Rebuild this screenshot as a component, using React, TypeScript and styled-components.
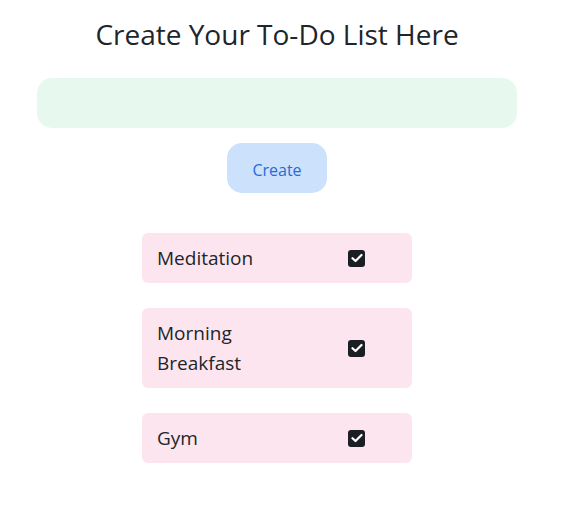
import React from "react";
import styled, { createGlobalStyle } from "styled-components";

const Global = createGlobalStyle`
  html, body { margin: 0; padding: 0; background: #ffffff; }
  body { font-family: "Open Sans", "Noto Sans", sans-serif; color: #212529; }
`;

const Page = styled.div`
  width: 554px;
  display: flex;
  flex-direction: column;
  align-items: center;
  padding-top: 14px;
`;

const Title = styled.h1`
  margin: 0;
  font-size: 28px;
  font-weight: 400;
  line-height: 40px;
  color: #212529;
`;

const Input = styled.input`
  box-sizing: border-box;
  margin-top: 24px;
  width: 480px;
  height: 50px;
  border: none;
  border-radius: 15px;
  background: #e7f8ef;
  outline: none;
  padding: 0 16px;
  font-family: inherit;
  font-size: 16px;
`;

const CreateButton = styled.button`
  margin-top: 15px;
  width: 100px;
  height: 50px;
  padding: 3px 0 0;
  border: none;
  border-radius: 15px;
  background: #cce1fb;
  color: #2a6ad4;
  font-family: inherit;
  font-size: 16px;
  cursor: pointer;
`;

const List = styled.div`
  margin-top: 40px;
  display: flex;
  flex-direction: column;
  gap: 25px;
`;

const Card = styled.div`
  box-sizing: border-box;
  width: 270px;
  padding: 10px 15px;
  border-radius: 6px;
  background: #fde5f0;
  display: flex;
  align-items: center;
`;

const Label = styled.span`
  flex: 0 0 150px;
  font-size: 19px;
  line-height: 30px;
  color: #212529;
`;

const Check = styled.span`
  margin-left: 41px;
  width: 17px;
  height: 17px;
  border-radius: 3px;
  background: #1b1e22;
  display: flex;
  align-items: center;
  justify-content: center;
`;

const items = ["Meditation", "Morning Breakfast", "Gym"];

export default function App() {
  return (
    <>
      <Global />
      <Page>
        <Title>Create Your To-Do List Here</Title>
        <Input type="text" />
        <CreateButton>Create</CreateButton>
        <List>
          {items.map((t) => (
            <Card key={t}>
              <Label>{t}</Label>
              <Check>
                <svg width="12" height="10" viewBox="0 0 12 10">
                  <path d="M1.5 5.2 L4.5 8 L10.5 2" fill="none" stroke="#fff" strokeWidth="2.2" strokeLinecap="round" strokeLinejoin="round" />
                </svg>
              </Check>
            </Card>
          ))}
        </List>
      </Page>
    </>
  );
}
